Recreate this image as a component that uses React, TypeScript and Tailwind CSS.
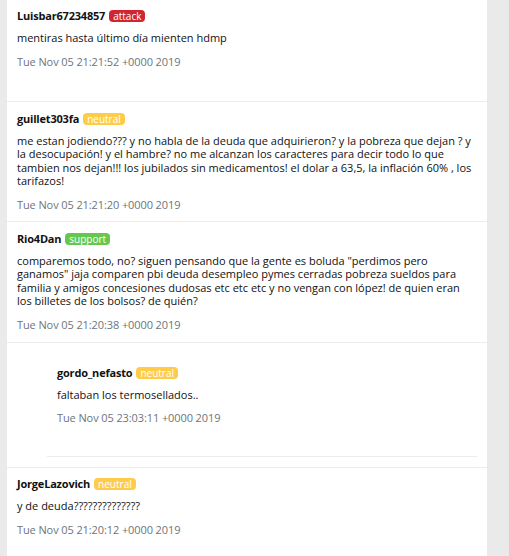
type Stance = 'attack' | 'neutral' | 'support';

type Comment = {
    user: string;
    stance: Stance;
    text: string;
    date: string;
    spacer?: boolean;
};

const badgeColor: Record<Stance, string> = {
    attack: 'bg-[#d0262f]',
    neutral: 'bg-[#ffcc4a]',
    support: 'bg-[#64c84e]',
};

const Badge = ({ stance }: { stance: Stance }) => (
    <span
        className={`${badgeColor[stance]} text-white text-[10px] leading-[12px] px-[4px] rounded-[4px] font-normal`}
    >
        {stance}
    </span>
);

const CommentBody = ({ c }: { c: Comment }) => (
    <div>
        <div className="flex items-center gap-[4px] h-[14px]">
            <span className="font-bold text-[11px] leading-[14px] tracking-[-0.2px] text-[#111]">{c.user}</span>
            <Badge stance={c.stance} />
        </div>
        <p className="mt-[8px] text-[11px] leading-[13.5px] text-[#111]">{c.text}</p>
        <p className="mt-[10px] text-[11px] leading-[13px] tracking-[-0.1px] text-[#6c757d]">{c.date}</p>
        {c.spacer && <div className="h-[23px]" />}
    </div>
);

const first: Comment = {
    user: 'Luisbar67234857',
    stance: 'attack',
    text: 'mentiras hasta último día mienten hdmp',
    date: 'Tue Nov 05 21:21:52 +0000 2019',
    spacer: true,
};

const second: Comment = {
    user: 'guillet303fa',
    stance: 'neutral',
    text: 'me estan jodiendo??? y no habla de la deuda que adquirieron? y la pobreza que dejan ? y la desocupación! y el hambre? no me alcanzan los caracteres para decir todo lo que tambien nos dejan!!! los jubilados sin medicamentos! el dolar a 63,5, la inflación 60% , los tarifazos!',
    date: 'Tue Nov 05 21:21:20 +0000 2019',
};

const third: Comment = {
    user: 'Rio4Dan',
    stance: 'support',
    text: 'comparemos todo, no? siguen pensando que la gente es boluda "perdimos pero ganamos" jaja comparen pbi deuda desempleo pymes cerradas pobreza sueldos para familia y amigos concesiones dudosas etc etc etc y no vengan con lópez! de quien eran los billetes de los bolsos? de quién?',
    date: 'Tue Nov 05 21:20:38 +0000 2019',
};

const reply: Comment = {
    user: 'gordo_nefasto',
    stance: 'neutral',
    text: 'faltaban los termosellados..',
    date: 'Tue Nov 05 23:03:11 +0000 2019',
};

const last: Comment = {
    user: 'JorgeLazovich',
    stance: 'neutral',
    text: 'y de deuda??????????????',
    date: 'Tue Nov 05 21:20:12 +0000 2019',
};

export default function App() {
    return (
        <div
            className="min-h-[556px] bg-[#eaeaea] pl-[7px]"
            style={{ fontFamily: '"Open Sans", "Noto Sans", sans-serif' }}
        >
            <div className="w-[480px] bg-white min-h-[556px]">
                <div className="px-[10px] pt-[9px] pb-[10px] border-b border-[#ececec]">
                    <CommentBody c={first} />
                </div>
                <div className="px-[10px] pt-[10px] pb-[10px] border-b border-[#ececec]">
                    <CommentBody c={second} />
                </div>
                <div className="px-[10px] pt-[10px] pb-[11px] border-b border-[#ececec]">
                    <CommentBody c={third} />
                </div>
                <div className="pl-[40px] pr-[10px] pt-[12px] pb-[10px] border-b border-[#ececec]">
                    <div className="pl-[10px] pt-[11px] pb-[32px] border-b border-[#ececec]">
                        <CommentBody c={reply} />
                    </div>
                </div>
                <div className="px-[10px] pt-[9px] pb-[10px]">
                    <CommentBody c={last} />
                </div>
            </div>
        </div>
    );
}
